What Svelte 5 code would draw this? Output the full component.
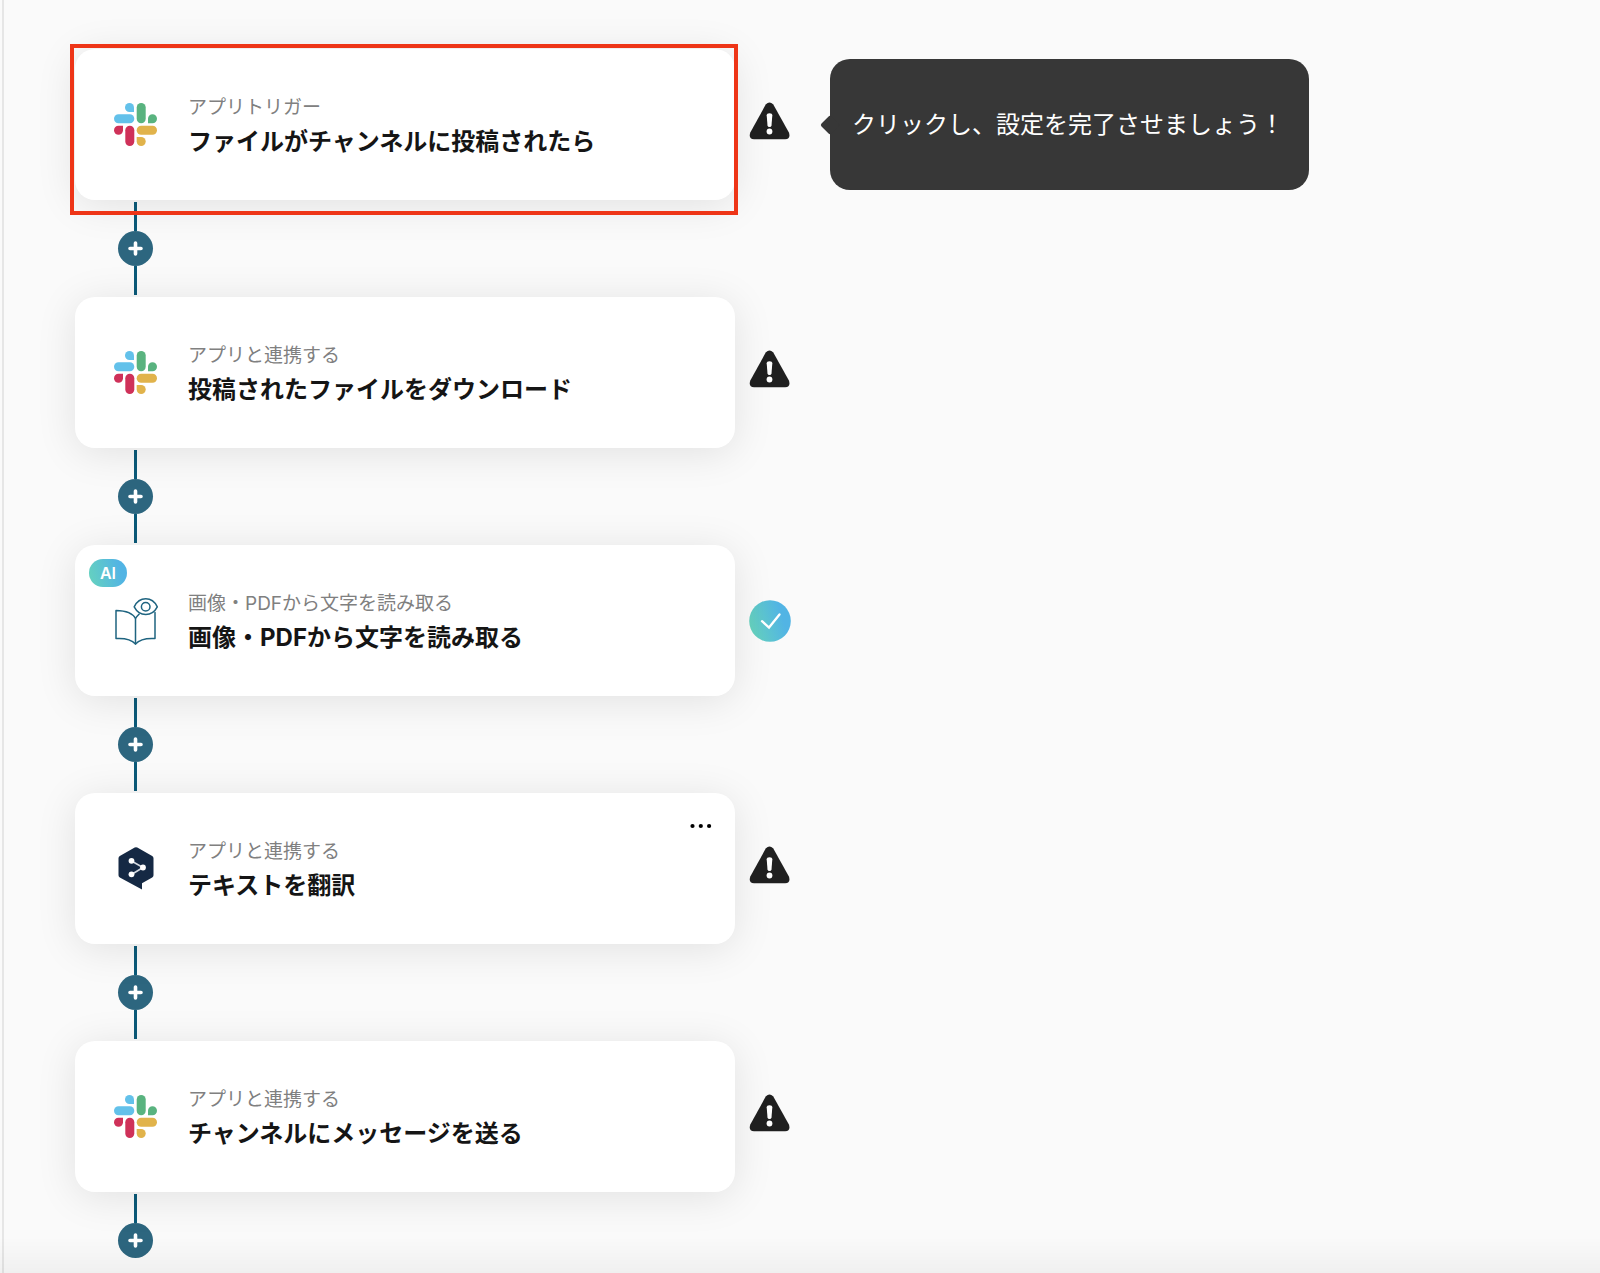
<script>
  const steps = [
    { icon: 'slack', kind: 'アプリトリガー', title: 'ファイルがチャンネルに投稿されたら', status: 'warning', selected: true, tip: 'クリックし、設定を完了させましょう！' },
    { icon: 'slack', kind: 'アプリと連携する', title: '投稿されたファイルをダウンロード', status: 'warning' },
    { icon: 'reader', kind: '画像・PDFから文字を読み取る', title: '画像・PDFから文字を読み取る', status: 'done', ai: true },
    { icon: 'deepl', kind: 'アプリと連携する', title: 'テキストを翻訳', status: 'warning', menu: true },
    { icon: 'slack', kind: 'アプリと連携する', title: 'チャンネルにメッセージを送る', status: 'warning' }
  ];
</script>

<main class="flow">
  {#each steps as step, i}
    <div class="row">
      <article class="card">
        {#if step.ai}<span class="badge">AI</span>{/if}
        <div class="icon">
          {#if step.icon === 'slack'}
            <svg width="43" height="43" viewBox="0 0 43 43" aria-hidden="true">
              <g fill="#63c1ea">
                <path d="M20 9H15.5A4.5 4.5 0 1 1 20 4.5Z" />
                <rect x="0" y="11.300" width="20.300" height="9" rx="4.500" />
              </g>
              <g fill="#59b37f">
                <rect x="22.700" y="0" width="9" height="20.300" rx="4.500" />
                <path d="M34 20.300V15.800A4.500 4.500 0 1 1 38.500 20.300Z" />
              </g>
              <g fill="#e1b34b">
                <rect x="22.700" y="22.700" width="20.300" height="9" rx="4.500" />
                <path d="M22.700 34H27.200A4.500 4.500 0 1 1 22.700 38.500Z" />
              </g>
              <g fill="#cf3159">
                <rect x="11.300" y="22.700" width="9" height="20.300" rx="4.500" />
                <path d="M9 22.700V27.200A4.500 4.500 0 1 1 4.500 22.700Z" />
              </g>
            </svg>
          {:else if step.icon === 'reader'}
            <svg width="45" height="48" viewBox="-2 -1 45 48" fill="none" stroke="#1f6480" stroke-width="1.500" stroke-linejoin="round" stroke-linecap="round" aria-hidden="true">
              <path d="M20.500 20.500C17.500 14.500 9 12.700 1 12.500V40.500C9.500 40 16.500 41.500 20.500 46C24.500 41.500 31.500 40 40 40.500V14.500" />
              <path d="M20.500 46V20.500C21.200 19 22.500 17.700 24.200 16" />
              <path d="M19.200 8.800C24.500-1.800 37-1.800 42.300 8.800C37 19 24.500 19 19.200 8.800Z" />
              <circle cx="30.700" cy="8.800" r="4.300" />
            </svg>
          {:else}
            <svg width="36" height="43" viewBox="0 0 36 43" aria-hidden="true">
              <path fill="#152944" d="M16.700.600Q18 0 19.300.600L34.200 9Q35.500 9.800 35.500 11.300V28.200Q35.500 29.600 34.200 30.400L24 36.200V42.500L1.800 30.400Q.500 29.600.500 28.200V11.300Q.500 9.800 1.800 9Z" />
              <path d="M13.500 14L25 20.500L13.500 27.500" fill="none" stroke="#d5dae2" stroke-width="1.600" />
              <g fill="#fff"><circle cx="13.500" cy="13.800" r="2.900" /><circle cx="25" cy="20.500" r="2.900" /><circle cx="13.500" cy="27.300" r="2.900" /></g>
            </svg>
          {/if}
        </div>
        <div class="text">
          <p>{step.kind}</p>
          <h2>{step.title}</h2>
        </div>
        {#if step.menu}
          <button class="menu" type="button" aria-label="メニュー">
            <svg width="22" height="6" viewBox="0 0 22 6" aria-hidden="true"><circle cx="2.500" cy="3" r="2.100" /><circle cx="10.800" cy="3" r="2.100" /><circle cx="19.100" cy="3" r="2.100" /></svg>
          </button>
        {/if}
        {#if step.selected}<span class="selection"></span>{/if}
      </article>

      <div class="status" class:done={step.status === 'done'}>
        {#if step.status === 'done'}
          <svg width="42" height="42" viewBox="0 0 42 42" role="img" aria-label="設定済み">
            <defs>
              <linearGradient id="done-fill" x1="0" y1=".65" x2="1" y2=".35">
                <stop offset="0" stop-color="#66d3bd" /><stop offset=".8" stop-color="#52b4e4" />
              </linearGradient>
            </defs>
            <circle cx="21" cy="21" r="20.800" fill="url(#done-fill)" />
            <path d="M13 21.200L20 27.500L30.500 14.500" fill="none" stroke="#fff" stroke-width="2.300" stroke-linecap="round" />
          </svg>
        {:else}
          <svg width="42" height="38" viewBox="0 0 42 38" role="img" aria-label="設定が未完了">
            <path fill="#202020" d="M16.700 2.600Q20.500-1.600 24.300 2.600L39.900 30.500Q42 36.800 36.200 37.200H5Q-.800 36.800 1.300 30.500Z" />
            <path fill="#fff" d="M17.700 13.200Q17.700 11.200 20.500 11.200T23.300 13.200L22.500 23.500Q22.200 25 20.500 25T18.500 23.500Z" />
            <circle cx="20.500" cy="29.500" r="2.900" fill="#fff" />
          </svg>
        {/if}
      </div>
      {#if step.tip}<div class="tip" role="tooltip">{step.tip}</div>{/if}
    </div>

    <div class="connector">
      <span class="line"></span>
      <button class="add" type="button" aria-label="ステップを追加">
        <svg width="15" height="15" viewBox="0 0 15 15" aria-hidden="true"><path d="M7.500 2V13M2 7.500H13" stroke="#fff" stroke-width="3.600" stroke-linecap="round" /></svg>
      </button>
      {#if i < steps.length - 1}<span class="line"></span>{/if}
    </div>
  {/each}
</main>

<style>
  :global(body) {
    margin: 0;
    background: #fafafa;
  }
  .flow {
    box-sizing: border-box;
    min-height: 100vh;
    margin-left: 2px;
    padding: 49px 24px 14px 71px;
    border-left: 2px solid #e6e6e6;
    font-family: Inter, "Noto Sans CJK JP", sans-serif;
    color: #151515;
  }
  .flow::after {
    content: "";
    position: fixed;
    inset: auto 0 0 0;
    height: 36px;
    background: linear-gradient(transparent, rgba(0, 0, 0, 0.04));
    pointer-events: none;
  }
  .row {
    display: flex;
    align-items: center;
  }
  .card {
    position: relative;
    box-sizing: border-box;
    display: flex;
    align-items: center;
    gap: 25px;
    flex: 0 1 660px;
    min-height: 151px;
    padding: 32px 33px;
    border-radius: 20px;
    background: #fff;
    box-shadow: 0 5px 40px rgba(0, 0, 0, 0.1);
  }
  .icon {
    display: flex;
    justify-content: center;
    flex: none;
    width: 55px;
  }
  svg {
    display: block;
  }
  p,
  h2 {
    margin: 0;
    line-height: 34px;
  }
  p {
    font-size: 19px;
    font-weight: 400;
    color: #808080;
  }
  h2 {
    font-size: 24px;
    font-weight: 700;
  }
  .badge {
    position: absolute;
    top: 14px;
    left: 14px;
    width: 38px;
    border-radius: 14px;
    background: linear-gradient(75deg, #66d3bd, #52b4e4 80%);
    color: #fff;
    font-size: 16px;
    font-weight: 600;
    line-height: 28px;
    text-align: center;
  }
  .menu {
    position: absolute;
    top: 22px;
    right: 15px;
    padding: 8px;
    border: 0;
    background: none;
    cursor: pointer;
  }
  .selection {
    position: absolute;
    inset: -5px -3px -15px -5px;
    z-index: 1;
    border: 4px solid #ee3517;
    pointer-events: none;
  }
  .status {
    flex: none;
    margin-left: 14px;
    padding-bottom: 8px;
  }
  .status.done {
    padding-bottom: 0;
  }
  .tip {
    position: relative;
    margin-left: 39px;
    padding: 48px 25px 48px 22px;
    border-radius: 20px;
    background: #373737;
    color: #fff;
    font-size: 24px;
    line-height: 35px;
  }
  .tip::before {
    content: "";
    position: absolute;
    top: 50%;
    left: -7px;
    width: 14px;
    height: 14px;
    border-radius: 2px;
    background: #373737;
    transform: translateY(-50%) rotate(45deg);
  }
  .connector {
    display: flex;
    flex-direction: column;
    align-items: center;
    width: 35px;
    margin-left: 43px;
    padding: 2px 0;
  }
  .connector:last-child {
    padding-bottom: 0;
  }
  .line {
    width: 3px;
    height: 29px;
    background: #0b5a79;
  }
  .add {
    display: flex;
    align-items: center;
    justify-content: center;
    width: 35px;
    height: 35px;
    padding: 0;
    border: 0;
    border-radius: 50%;
    background: #2d667f;
    cursor: pointer;
  }
</style>
